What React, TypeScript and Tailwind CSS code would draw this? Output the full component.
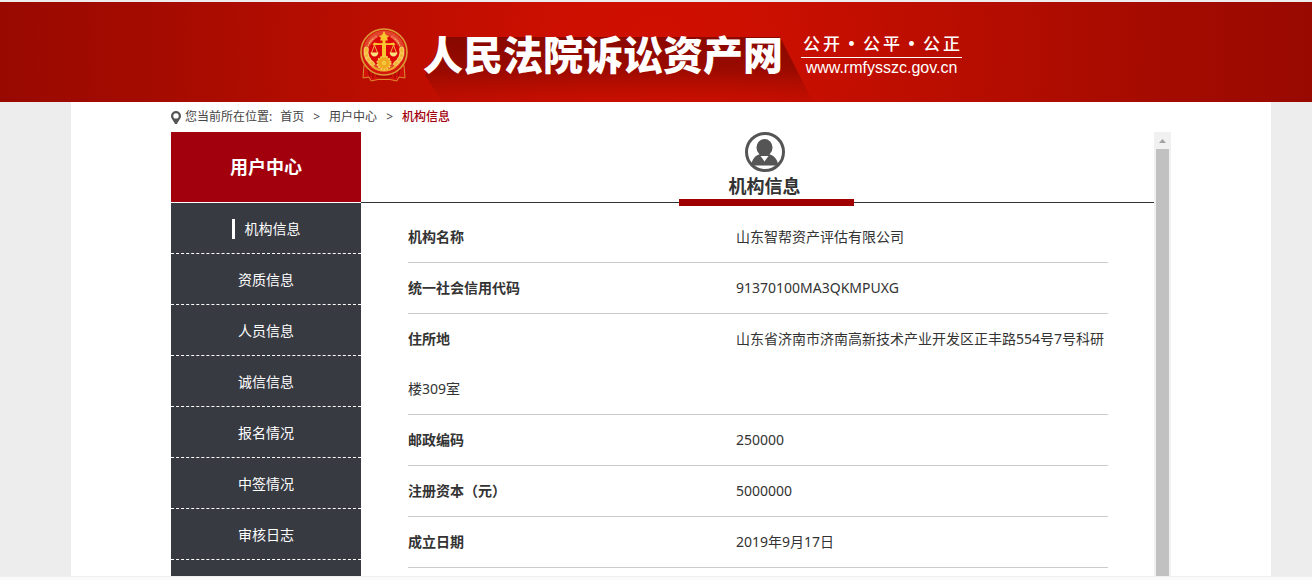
import React, { useState } from 'react';
import { clsx } from 'clsx';

// --- Types and data ---
interface InfoRow {
    label: string;
    value: string;
}

const MENU_ITEMS = ['机构信息', '资质信息', '人员信息', '诚信信息', '报名情况', '中签情况', '审核日志'];

const INFO_ROWS: InfoRow[] = [
    { label: '机构名称', value: '山东智帮资产评估有限公司' },
    { label: '统一社会信用代码', value: '91370100MA3QKMPUXG' },
    { label: '住所地', value: '山东省济南市济南高新技术产业开发区正丰路554号7号科研楼309室' },
    { label: '邮政编码', value: '250000' },
    { label: '注册资本（元）', value: '5000000' },
    { label: '成立日期', value: '2019年9月17日' },
];

// --- Icons ---
// x, y and tilt of each grain on the left ear, mirrored for the right one
const WHEAT = [
    [11.5, 35, 40], [8.2, 31, 55], [6.4, 26.8, 75], [6.2, 22.2, 95],
];

const Emblem = () => (
    <svg viewBox="0 0 48 54" className="mt-1.5 w-12 h-[54px] shrink-0" aria-hidden="true">
        {/* ribbon */}
        <path d="M4 37 L9 33 Q24 44 39 33 L44 37 L45 50 L39 49 L37 53 L30 51.500 H18 L11 53 L9 49 L3 50Z" fill="#d01208" stroke="#dd8a2c" strokeWidth="1" />
        <path d="M8 41 L10 48 M13 43 V50 M40 41 L38 48 M35 43 V50 M16 48 Q24 50 32 48" stroke="#a50803" strokeWidth="1.400" fill="none" />
        <circle cx="24" cy="24" r="23" fill="#d3170c" stroke="#dc9a35" strokeWidth="1.600" />
        <circle cx="24" cy="23" r="18" fill="none" stroke="#e2432a" strokeWidth="5" />
        <path d="M8 15 Q11 10 16 7 L19 11 Q14 13 11 18Z M40 15 Q37 10 32 7 L29 11 Q34 13 37 18Z" fill="#e9694c" />
        <circle cx="24" cy="23" r="15" fill="#dc0808" />
        {/* wheat ears on both sides */}
        {WHEAT.map(([x, y, r]) => (
            <g key={y} fill="#f3b637" stroke="#fbe38f" strokeWidth="0.6">
                <ellipse cx={x} cy={y} rx="3.400" ry="2.200" transform={`rotate(${r} ${x} ${y})`} />
                <ellipse cx={48 - x} cy={y} rx="3.400" ry="2.200" transform={`rotate(${-r} ${48 - x} ${y})`} />
            </g>
        ))}
        <path d="M8 18 Q10 13 13 11 M40 18 Q38 13 35 11" stroke="#f0b85a" strokeWidth="1.200" strokeDasharray="1.500 1" fill="none" />
        {/* scales of justice */}
        <path d="M24 3 L26 7 L29 8 L27 10 L28 12.500 L25.500 12.500 L25.500 15 Q30 15.500 34 14.500 L35.500 17 H26 V31 H22 V17 H12.500 L14 14.500 Q18 15.500 22.500 15 V12.500 L20 12.500 L21 10 L19 8 L22 7Z" fill="#f9c42e" />
        <path d="M14.500 17 L11.500 25 M14.500 17 L17.500 25 M33.500 17 L30.500 25 M33.500 17 L36.500 25" stroke="#f3c14c" strokeWidth="0.9" fill="none" />
        <path d="M10.500 24.500 H18.500 Q17.500 28.500 14.500 28.500 Q11.500 28.500 10.500 24.500Z M29.500 24.500 H37.500 Q36.500 28.500 33.500 28.500 Q30.500 28.500 29.500 24.500Z" fill="#fbe27e" />
        {/* gear */}
        <path d="M12 38 Q17 42.500 24 42.500 Q31 42.500 36 38" stroke="#f0a92c" strokeWidth="2.200" fill="none" />
        <circle cx="24" cy="35" r="6.600" fill="#f2a91f" stroke="#f9d25a" strokeWidth="1.800" strokeDasharray="1.800 1.200" />
        <circle cx="24" cy="35" r="3" fill="#f8c63a" stroke="#e39a1c" strokeWidth="0.8" />
    </svg>
);

const PinIcon = () => (
    <svg viewBox="0 0 10 13" className="w-2.5 h-[13px]" aria-hidden="true">
        <path
            fill="#555"
            fillRule="evenodd"
            d="M5 0a5 5 0 0 1 5 5c0 2.800-2.600 4.500-4 8H4C2.600 9.500 0 7.800 0 5a5 5 0 0 1 5-5Zm0 2.200a2.700 2.700 0 1 0 0 5.400 2.700 2.700 0 0 0 0-5.400Z"
        />
    </svg>
);

const UserIcon = () => (
    <svg viewBox="0 0 40 40" className="w-10 h-10 shrink-0" aria-hidden="true">
        <circle cx="20" cy="20" r="18.500" fill="#fff" stroke="#555" strokeWidth="3" />
        <ellipse cx="19.500" cy="15.500" rx="8" ry="8.500" fill="#555" />
        <path d="M6.500 33.500C6.500 27 10.500 23.500 15 22h9c4.500 1.500 9 5 9 11.500Z" fill="#555" />
        <path d="M15.500 24h8L19.500 29.500Z" fill="#fff" />
    </svg>
);

// --- Header ---
const Header = () => (
    <header className="flex h-[102px] shrink-0 items-center justify-center border-t-2 border-[#ededed] bg-[radial-gradient(circle_at_50%_50%,#d01000_0,#cc0f00_100px,#b60d00_320px,#a50b00_500px,#980900_660px)] pl-2.5 text-white">
        <Emblem />
        <div className="relative ml-[15px] flex h-full items-center">
            <svg
                viewBox="0 0 390 65"
                preserveAspectRatio="none"
                className="absolute bottom-0 left-0 h-[65px] w-[390px]"
                aria-hidden="true"
            >
                <defs>
                    <linearGradient id="titleShade" x1="0" y1="0" x2="0" y2="1">
                        <stop offset="0" stopColor="#7d0700" stopOpacity="0.85" />
                        <stop offset="0.5" stopColor="#840800" stopOpacity="0.7" />
                        <stop offset="1" stopColor="#b00c00" stopOpacity="0.2" />
                    </linearGradient>
                </defs>
                <path d="M22 0H357L390 65H19L2 38Z" fill="url(#titleShade)" />
            </svg>
            <h1 className="relative pt-1.5 text-[40px] leading-none font-black whitespace-nowrap">人民法院诉讼资产网</h1>
        </div>
        <div className="ml-[18px] w-[161px] pt-1">
            <p className="flex justify-between border-b border-white px-0.5 pb-0.5 font-['Noto_Sans_CJK_SC',sans-serif] text-[17px] leading-6 font-medium">
                {'公开·公平·公正'.split('').map((char, index) => (
                    <span key={index} className={clsx(char === '·' && 'font-black')}>{char}</span>
                ))}
            </p>
            <a href="#home" className="block text-center font-['Liberation_Sans',sans-serif] text-base leading-5">
                www.rmfysszc.gov.cn
            </a>
        </div>
    </header>
);

const Breadcrumb = () => (
    <nav className="flex h-[30px] items-center text-xs text-[#444]" aria-label="当前位置">
        <PinIcon />
        <span className="ml-1 mr-2">您当前所在位置:</span>
        <a href="#home">首页</a>
        <span className="mx-[9px]">&gt;</span>
        <a href="#user">用户中心</a>
        <span className="mx-[9px]">&gt;</span>
        <a href="#info" className="font-medium text-[#a1000c]">机构信息</a>
    </nav>
);

// --- Sidebar ---
interface SidebarProps {
    active: string;
    onSelect: (item: string) => void;
}

const Sidebar: React.FC<SidebarProps> = ({ active, onSelect }) => (
    <aside className="w-[190px] shrink-0 overflow-hidden bg-[#383a42]">
        <h2 className="border-b border-white bg-[#a1000c] text-center text-lg leading-[70px] font-bold text-white">用户中心</h2>
        <ul>
            {MENU_ITEMS.map(item => (
                <li key={item} className="border-b border-dashed border-white">
                    <button
                        type="button"
                        className="flex h-[50px] w-full items-center justify-center pt-px text-sm text-white"
                        onClick={() => onSelect(item)}
                    >
                        <span className={clsx(item === active && 'border-l-3 border-white pl-2.5')}>{item}</span>
                    </button>
                </li>
            ))}
        </ul>
    </aside>
);

// --- Info panel ---
const InfoPanel = () => (
    <section className="min-w-0 flex-1 overflow-hidden">
        <div className="flex h-[71px] border-b border-[#333]">
            <div className="ml-[318px] flex h-[74px] w-[175px] flex-col items-center border-b-7 border-[#a10000] pr-1">
                <UserIcon />
                <h3 className="text-lg leading-7 font-bold text-[#333]">机构信息</h3>
            </div>
        </div>
        <dl className="mr-[46px] ml-[47px] pt-[9px] text-sm leading-[50px] text-[#333]">
            {INFO_ROWS.map(({ label, value }) => (
                <div key={label} className="border-b border-[#ccc]">
                    <dt className="inline-block w-[328px] font-semibold">{label}</dt>
                    <dd className="inline break-all">{value}</dd>
                </div>
            ))}
        </dl>
    </section>
);

const ScrollBar = () => (
    <div className="flex w-[17px] shrink-0 flex-col items-center bg-[#f1f1f1]" aria-hidden="true">
        <svg viewBox="0 0 17 17" className="size-[17px] shrink-0">
            <path d="M5 11L8.500 7L12 11Z" fill="#a3a3a3" />
        </svg>
        <div className="w-[13px] flex-1 bg-[#c1c1c1]" />
    </div>
);

const App = () => {
    const [active, setActive] = useState(MENU_ITEMS[0]);

    return (
        <div className="flex h-screen flex-col bg-[#fafafa] font-['Noto_Sans','Noto_Sans_CJK_SC',sans-serif]">
            <Header />
            <div className="flex min-h-0 flex-1 border-b border-[#f0f0f0] bg-[#ededed] pr-[41px] pl-[71px]">
                <main className="flex min-w-0 flex-1 flex-col bg-white px-[100px]">
                    <Breadcrumb />
                    <div className="flex min-h-0 flex-1">
                        <Sidebar active={active} onSelect={setActive} />
                        <InfoPanel />
                        <ScrollBar />
                    </div>
                </main>
            </div>
            <footer className="h-[3px] shrink-0" />
        </div>
    );
};

export default App;
